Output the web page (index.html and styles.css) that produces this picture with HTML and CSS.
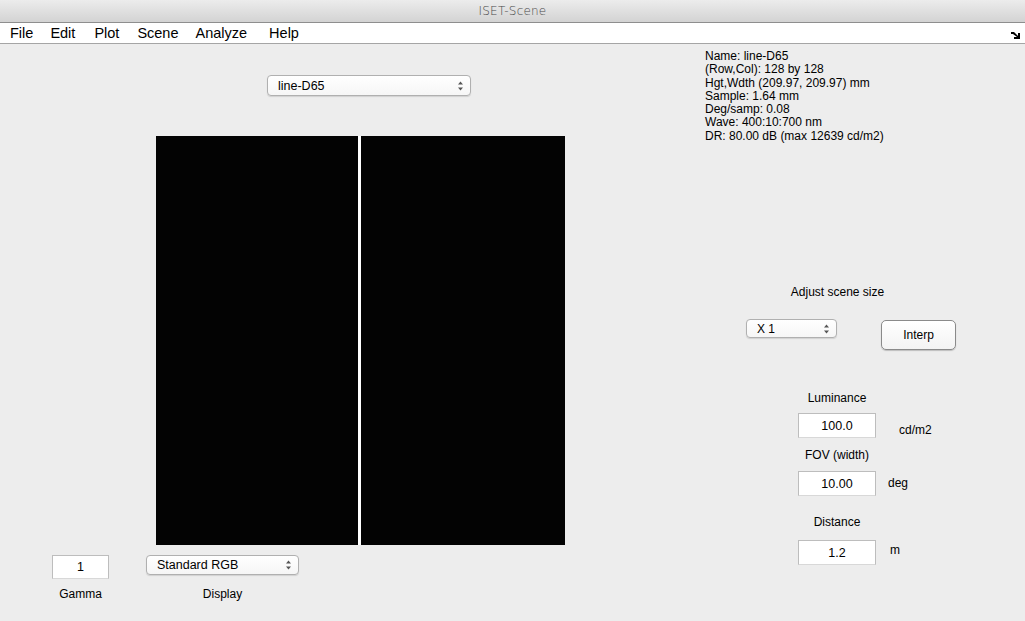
FILE: index.html
```html
<!DOCTYPE html>
<html>
<head>
<meta charset="utf-8">
<title>ISET-Scene</title>
<link rel="stylesheet" href="styles.css">
</head>
<body>
<div class="titlebar">ISET-Scene</div>
<div class="menubar">
  <span class="mi mi-file">File</span>
  <span class="mi mi-edit">Edit</span>
  <span class="mi mi-plot">Plot</span>
  <span class="mi mi-scene">Scene</span>
  <span class="mi mi-analyze">Analyze</span>
  <span class="mi mi-help">Help</span>
  <svg class="dock" width="10" height="9" viewBox="0 0 10 9"><path d="M0 1 L3 1 L7 5 L7 2 L9 2 L9 8 L3 8 L3 6 L6 6 L2 3 L0 3 Z" fill="#000"/></svg>
</div>
<div class="main">
  <div class="left">
    <div class="popup popup-scene"><span>line-D65</span><svg class="arr" width="7" height="10" viewBox="0 0 7 10"><path d="M3.5 0.5 L6 3.5 L1 3.5 Z M3.5 9.5 L6 6.5 L1 6.5 Z" fill="#555"/></svg></div>
    <div class="image">
      <div class="half half-l"></div>
      <div class="line"></div>
      <div class="half half-r"></div>
    </div>
    <div class="bottom">
      <div class="group gamma">
        <div class="edit edit-gamma">1</div>
        <div class="lbl">Gamma</div>
      </div>
      <div class="group display">
        <div class="popup popup-display"><span>Standard RGB</span><svg class="arr" width="7" height="10" viewBox="0 0 7 10"><path d="M3.5 0.5 L6 3.5 L1 3.5 Z M3.5 9.5 L6 6.5 L1 6.5 Z" fill="#555"/></svg></div>
        <div class="lbl">Display</div>
      </div>
    </div>
  </div>
  <div class="right">
    <div class="info">
      <div>Name: line-D65</div>
      <div>(Row,Col): 128 by 128</div>
      <div>Hgt,Wdth (209.97, 209.97) mm</div>
      <div>Sample: 1.64 mm</div>
      <div>Deg/samp: 0.08</div>
      <div>Wave: 400:10:700 nm</div>
      <div>DR: 80.00 dB (max 12639 cd/m2)</div>
    </div>
    <div class="adjust">Adjust scene size</div>
    <div class="sizerow">
      <div class="popup popup-size"><span>X 1</span><svg class="arr" width="7" height="10" viewBox="0 0 7 10"><path d="M3.5 0.5 L6 3.5 L1 3.5 Z M3.5 9.5 L6 6.5 L1 6.5 Z" fill="#555"/></svg></div>
      <div class="button">Interp</div>
    </div>
    <div class="fields">
      <div class="flabel f-lum">Luminance</div>
      <div class="frow r-lum"><div class="edit">100.0</div><span class="unit u-lum">cd/m2</span></div>
      <div class="flabel f-fov">FOV (width)</div>
      <div class="frow r-fov"><div class="edit">10.00</div><span class="unit u-fov">deg</span></div>
      <div class="flabel f-dist">Distance</div>
      <div class="frow r-dist"><div class="edit">1.2</div><span class="unit u-dist">m</span></div>
    </div>
  </div>
</div>
</body>
</html>
```
FILE: styles.css
```css
* { box-sizing: border-box; }
html, body { margin: 0; padding: 0; }
body {
  width: 1025px;
  height: 621px;
  overflow: hidden;
  background: #ededed;
  font-family: "Liberation Sans", Arial, sans-serif;
  color: #000;
}
.titlebar {
  height: 23px;
  background: linear-gradient(#ececec, #d3d3d3);
  border-bottom: 1px solid #8e8e8e;
  text-align: center;
  font-family: "DejaVu Sans", sans-serif;
  font-size: 12px;
  font-weight: 300;
  line-height: 22px;
  color: #4a4a4a;
  letter-spacing: 0.2px;
}
.menubar {
  height: 21px;
  background: #fff;
  border-bottom: 1px solid #a5a5a5;
  display: flex;
  align-items: center;
  font-size: 14.5px;
}
.mi-file { margin-left: 10px; }
.mi-edit { margin-left: 17px; }
.mi-plot { margin-left: 19px; }
.mi-scene { margin-left: 18px; }
.mi-analyze { margin-left: 17px; }
.mi-help { margin-left: 22px; }
.dock { margin-left: auto; margin-right: 4px; margin-top: 4px; }

.main { display: flex; height: 576px; }
.left { width: 690px; }
.right { flex: 1; display: flex; flex-direction: column; }

.popup {
  display: flex;
  align-items: center;
  height: 21px;
  background: linear-gradient(#ffffff, #f6f6f6);
  border: 1px solid #b0b0b0;
  border-radius: 4px;
  box-shadow: 0 1px 1px rgba(0,0,0,0.12);
  font-size: 12.5px;
  padding-left: 10px;
  padding-right: 6px;
}
.popup span { flex: 1; }
.popup .arr { flex: none; }
.popup-scene { margin-left: 267px; margin-top: 31px; width: 204px; }
.image {
  display: flex;
  margin-left: 156px;
  margin-top: 40px;
  width: 409px;
  height: 409px;
}
.half { background: #030303; }
.half-l { width: 202px; }
.line { width: 3px; background: #fff; }
.half-r { width: 204px; }

.bottom { display: flex; margin-top: 10px; }
.group { display: flex; flex-direction: column; align-items: center; }
.gamma { margin-left: 52px; width: 57px; }
.display { margin-left: 37px; width: 153px; }
.edit {
  background: #fff;
  border: 1px solid #bdbdbd;
  border-bottom-color: #d8d8d8;
  height: 25px;
  display: flex;
  align-items: center;
  justify-content: center;
  font-size: 12.5px;
  flex: none;
}
.edit-gamma { width: 57px; height: 24px; }
.popup-display { width: 153px; height: 20px; }
.lbl { font-size: 12px; }
.gamma .lbl { margin-top: 8px; }
.display .lbl { margin-top: 12px; }

.info {
  margin-left: 15px;
  margin-top: 6px;
  font-size: 12px;
  line-height: 13.3px;
}
.adjust {
  margin-top: 142px;
  width: 295px;
  text-align: center;
  font-size: 12px;
}
.sizerow { display: flex; margin-top: 20px; align-items: flex-start; }
.popup-size { margin-left: 56px; width: 91px; height: 19px; font-size: 12px; padding-left: 10px; }
.button {
  margin-left: 44px;
  margin-top: 1px;
  width: 75px;
  height: 30px;
  border: 1px solid #8a8a8a;
  border-radius: 5px;
  background: linear-gradient(#ffffff, #f3f3f3);
  box-shadow: 0 1px 1px rgba(0,0,0,0.2);
  display: flex;
  align-items: center;
  justify-content: center;
  font-size: 12px;
}
.fields { display: flex; flex-direction: column; margin-left: 108px; }
.flabel { width: 78px; text-align: center; font-size: 12px; line-height: 14px; height: 14px; }
.f-lum { margin-top: 41px; }
.f-fov { margin-top: 10px; }
.f-dist { margin-top: 19px; }
.frow { display: flex; align-items: flex-start; height: 25px; }
.frow .edit { width: 78px; height: 25px; }
.r-lum { margin-top: 8px; }
.r-fov { margin-top: 9px; }
.r-dist { margin-top: 11px; }
.unit { font-size: 12px; line-height: 14px; }
.u-lum { margin-left: 23px; margin-top: 10px; }
.u-fov { margin-left: 12px; margin-top: 5px; }
.u-dist { margin-left: 14px; margin-top: 3px; }
```
